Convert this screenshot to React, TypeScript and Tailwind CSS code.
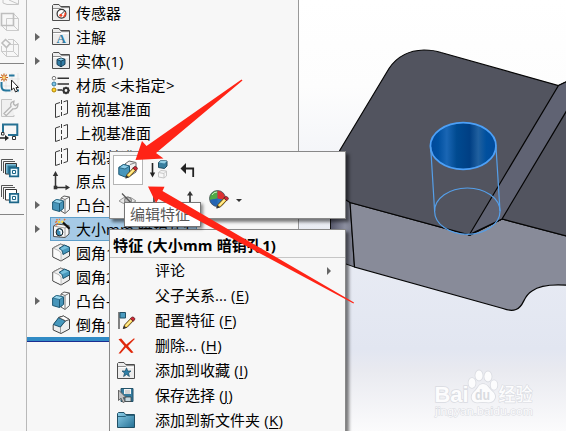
import React from "react";

type IconProps = { children: React.ReactNode; w?: number; h?: number; vb?: string };

function Ico({ children, w = 20, h = 20, vb = "0 0 20 20" }: IconProps) {
  return (
    <svg width={w} height={h} viewBox={vb} className="block shrink-0 overflow-visible" fill="none">
      {children}
    </svg>
  );
}

const Folder = ({ children }: { children: React.ReactNode }) => (
  <Ico>
    <path d="M.5 17.5V2.5L1.5 1.5H7L8.5 3.5H17.5V17.5Z" fill="#ececec" stroke="#4d4d4d" />
    <path d="M1 5.5H8.5L9.5 4.5H17" stroke="#777" strokeWidth=".8" />
    <path d="M1.5 6.5H16.5" stroke="#fff" />
    {children}
  </Ico>
);

const Sensor = () => (
  <Folder>
    <circle cx="9.5" cy="10.8" r="4.4" fill="#fff" stroke="#333" strokeWidth="1.2" />
    <path d="M9.5 11L12.5 8" stroke="#333" />
    <path d="M13.2 9.5A4 4 0 0 1 11.5 13.8" stroke="#ee4324" strokeWidth="1.6" />
    <circle cx="8.8" cy="12.2" r="1.5" fill="#ee4324" />
  </Folder>
);

const Note = () => (
  <Folder>
    <text x="9.2" y="15.6" textAnchor="middle" fontSize="13" fontWeight="700" fill="#2f7ba3" fontFamily="Liberation Serif, serif">
      A
    </text>
  </Folder>
);

const Solid = () => (
  <Folder>
    <path d="M5 8.5L9 7L13 8.3V13.3L9 15.8L5 13.5Z" fill="#327da5" stroke="#193f56" />
    <path d="M5 8.5L9 10L13 8.3M9 10V15.5" stroke="#153b50" />
    <path d="M5.9 8.4L9 7.4L12 8.3L9 9.4Z" fill="#8bd0ee" />
  </Folder>
);

const Material = () => (
  <Ico>
    <circle cx="2" cy="3.2" r="1.8" fill="#fff" stroke="#777" />
    <circle cx="2" cy="9" r="2" fill="#7dc5e8" stroke="#38799b" />
    <circle cx="2" cy="15" r="2" fill="#ffd12d" stroke="#ad8200" />
    <path d="M5.5 3.2H17M5.5 9H17M5.5 15H10" stroke="#333" strokeWidth="1.4" />
    <circle cx="14" cy="15.5" r="2.4" stroke="#333" strokeWidth="2" />
    <path d="M14 11.7V13M14 18V19.3M10.2 15.5H11.5M16.5 15.5H17.8M11.3 12.8L12.2 13.7M15.8 17.3L16.7 18.2M16.7 12.8L15.8 13.7M12.2 17.3L11.3 18.2" stroke="#333" strokeWidth="1.4" />
  </Ico>
);

const Plane = () => (
  <Ico>
    <path d="M8 3.5L3.5 5V18.5L8 17M11.5 2.8L15.5 1.5V14.5L11.5 15.8" stroke="#3c3c3c" />
    <path d="M9.5 1V19" stroke="#3c3c3c" strokeDasharray="4 2" />
  </Ico>
);

const Origin = () => (
  <Ico>
    <path d="M3.5 4V16.5H16" stroke="#333" strokeWidth="1.5" />
    <path d="M.8 5L3.5 0L6.2 5ZM13.5 13.8L18 16.5L13.5 19.2Z" fill="#333" />
    <path d="M1.7 14.7H5.3V18.3H1.7Z" fill="#333" />
  </Ico>
);

const Extrude = () => (
  <Ico>
    <path d="M9 3L12 1L17.5 2V14.5L13 18.5L9 16Z" fill="#fafafa" stroke="#5b5b5b" />
    <path d="M13 4.5V18M13 4.5L17.5 2M9 3L13 4.5" stroke="#777" />
    <path d="M.6 7L4.5 4.5L11.5 6V13.5L7.5 16.5L.6 14.5Z" fill="#4795ba" stroke="#1d5874" />
    <path d="M.8 7L7.5 8.5L11.5 6L4.5 4.5Z" fill="#9ad7ee" stroke="#1c5b7a" strokeWidth=".7" />
    <path d="M7.5 8.5V16.5" stroke="#1d5874" />
  </Ico>
);

const Hole = () => (
  <Ico>
    <path d="M1.5 7L5 5L17 6.5V15L13 18.5L1.5 17.5Z" fill="#f8f8f8" stroke="#4c4c4c" />
    <path d="M1.5 7L13 9V18.5M13 9L17 6.5" stroke="#888" strokeWidth=".8" />
    <ellipse cx="7.5" cy="13.2" rx="3.4" ry="3.7" fill="#3c8bb3" stroke="#222" />
    <path d="M7 10.8L9.2 12.2V15.2" stroke="#fff" strokeWidth="1.5" />
    <path d="M10.5 3L17.5 9.8" stroke="#111" strokeWidth="2.3" />
    <path d="M9.5 2L11 3.5" stroke="#ffe35c" strokeWidth="2.4" />
    <path d="M3.2 3.5L5 2.2M7.5 .8V-.3M12 1.2L13.2 0M4.5 .3L5.5 1.3M4 6L5.7 5.2" stroke="#e86929" strokeWidth="1.4" />
    <path d="M6 3.5L8 2.5" stroke="#ffd329" strokeWidth="2" />
  </Ico>
);

const Fillet = () => (
  <Ico>
    <path d="M.8 5L8.5 1L17.5 4.3V13L9 18L.8 14Z" fill="#eee" stroke="#444" />
    <path d="M1 5L7 7.8L9 10V18M1 5L8.5 1.3L14 3" stroke="#aaa" strokeWidth=".8" />
    <path d="M1.5 6L6.7 8.4L8.3 10.5V16.7L1.5 13.4Z" fill="#fafafa" />
    <path d="M7 5.5L12.5 2L17.5 4.3V8L11 11.5C10.5 8 9.5 6 7 5.5Z" fill="#4798bd" stroke="#1b526d" />
    <path d="M8.5 5.3L12.7 2.9L16.5 4.5L10.2 7.3Z" fill="#78c0dc" />
  </Ico>
);

const Chamfer = () => (
  <Ico>
    <path d="M1.2 10L7.5 2L11.5 1L17.5 4.5V14L9 18.5L1.2 15Z" fill="#eee" stroke="#444" />
    <path d="M8.5 12V18M8.5 12L13.5 6L17.5 4.5" stroke="#999" />
    <path d="M1.4 9.5L6.7 2.5L13.5 5.8L8.3 12Z" fill="#4798bd" stroke="#1b526d" />
    <path d="M6.7 2.5L11.5 1L17.5 4.5L13.5 5.8Z" fill="#fff" stroke="#444" strokeWidth=".8" />
  </Ico>
);

const Pencil = () => (
  <g>
    <path d="M7.8 18L9 14.5L15.2 8L17.8 10.3L11.6 16.8Z" fill="#ffd44e" stroke="#4a3a20" strokeWidth=".9" />
    <path d="M10.5 15.2L16.2 9.2" stroke="#fff2a6" strokeWidth="1.2" />
    <path d="M14.8 8.2L16 6.9Q17.3 5.9 18.7 7.2T18.9 9.5L17.8 10.7Z" fill="#cf2834" stroke="#5b1c20" strokeWidth=".8" />
    <path d="M7.3 18.6L8.6 15.2L10.9 17.3Z" fill="#333" />
  </g>
);

const tree: { icon: () => React.ReactElement; text: string; arrow?: boolean; selected?: boolean }[] = [
  { icon: Sensor, text: "传感器" },
  { icon: Note, text: "注解", arrow: true },
  { icon: Solid, text: "实体(1)", arrow: true },
  { icon: Material, text: "材质 <未指定>" },
  { icon: Plane, text: "前视基准面" },
  { icon: Plane, text: "上视基准面" },
  { icon: Plane, text: "右视基准面" },
  { icon: Origin, text: "原点" },
  { icon: Extrude, text: "凸台-拉伸1", arrow: true },
  { icon: Hole, text: "大小mm 暗销孔1", arrow: true, selected: true },
  { icon: Fillet, text: "圆角1" },
  { icon: Fillet, text: "圆角2" },
  { icon: Extrude, text: "凸台-拉伸2", arrow: true },
  { icon: Chamfer, text: "倒角1" },
];

function WireCube({ ball }: { ball?: boolean }) {
  return (
    <Ico>
      <path d="M6.5 6.5H18.5V18.5H6.5ZM13.5 1.5L18.5 6.5M1.5 13.5L6.5 18.5M13.5 13.5L18.5 18.5" stroke="#cbcbcb" />
      {ball ? (
        <>
          <path d="M8 1.5H13.5V13.5H1.5V8" stroke="#cbcbcb" />
          <path d="M2 5L5.5 1.5L10 5.5L6.5 9.5Z" fill="#f7f7f7" stroke="#bdbdbd" strokeWidth="1.6" />
        </>
      ) : (
        <path d="M1.5 1.5H13.5V13.5H1.5Z" stroke="#bebebe" strokeWidth="1.6" />
      )}
    </Ico>
  );
}

function Layers({ open }: { open?: boolean }) {
  return (
    <Ico>
      <path d="M1.5 13V1.5H13" stroke="#555" />
      <path d="M3.5 15V3.5H15" stroke="#555" />
      <path d="M5.5 5.5H16.5V16H5.5Z" fill={open ? "#fff" : "#7fbcd6"} stroke="#333" />
      {!open && <path d="M7.5 7.5H16V15.5H7.5Z" fill="#2d7898" />}
      <path d="M9.8 9.8H18.3V18.3H9.8Z" fill="#e9f7fc" stroke="#1d6688" strokeWidth="1.7" />
      <path d="M12.5 12.5H15.5V15.5H12.5Z" fill="#fff" stroke="#1d6688" />
    </Ico>
  );
}

function ToolRail() {
  return (
    <aside className="flex h-full w-[27px] shrink-0 flex-col overflow-hidden border-r border-[#b9b9b9]">
      <div className="h-[12px] shrink-0 overflow-hidden">
        <svg width="20" height="6" viewBox="0 0 20 6" fill="none">
          <path d="M3 0V3L7 4.5H18.5V0M9 0L18 4" stroke="#c6c6c6" />
        </svg>
      </div>
      <div className="flex h-[51px] shrink-0 flex-col gap-[6px] pb-[5px]">
        <WireCube />
        <WireCube ball />
      </div>
      <div className="mr-[2px] h-px shrink-0 bg-[#858585]" />
      <div className="flex h-[85px] shrink-0 flex-col gap-[5px] pt-[9px]">
        <Ico>
          <path d="M6 0V20M12 0V20M18 0V20M0 6H20M0 13H20" stroke="#dedede" strokeWidth=".7" />
          <path d="M9 2.5H14.5M1.5 9V13Q1.5 17.5 6 17.5H10.5M15 17.5H19" stroke="#25779d" strokeWidth="2" />
          <path d="M4 .5V8.5M0 4.5H8M1.2 1.7L6.8 7.3M6.8 1.7L1.2 7.3" stroke="#c8641e" strokeWidth="1.2" />
          <circle cx="4" cy="4.5" r="1.6" fill="#ffd77a" />
          <path d="M11.5 7V17L13.8 15L15.5 19L17.5 18L16 14.5H18.5Z" fill="#fff" stroke="#222" />
        </Ico>
        <Ico>
          <path d="M14 17V18.5H1.5V1.5H12" fill="#f0f0f0" stroke="#c4c4c4" />
          <path d="M4 15.5L11 8.5Q9.5 4.5 14 3.2L13.5 6L15.3 7.6L18 6Q18 11.5 13 10.8L6.2 17.6Z" fill="#f4f4f4" stroke="#b5b5b5" strokeWidth="1.3" />
        </Ico>
        <Ico>
          <path d="M3 9V1.5H17.3V12H8" stroke="#267193" strokeWidth="2" />
          <path d="M0 15H6" stroke="#222" strokeWidth="1.5" />
          <path d="M5 12L9 15L5 18Z" fill="#222" />
          <path d="M12.5 13.5H15.5V16.5H12.5ZM1.5 9.5H4V12H1.5Z" fill="#fff" stroke="#333" />
        </Ico>
      </div>
      <div className="mr-[2px] h-px shrink-0 bg-[#858585]" />
      <div className="flex h-[64px] shrink-0 flex-col gap-[6px] pt-[8px]">
        <Layers />
        <Layers open />
      </div>
      <div className="mr-[2px] h-px shrink-0 bg-[#858585]" />
    </aside>
  );
}

function FeatureTree() {
  return (
    <section className="flex h-full w-[272px] shrink-0 flex-col border-r border-[#999] pt-[1px]">
      {tree.map(({ icon: Icon, text, arrow, selected }, i) => (
        <div key={i} className="flex h-[24px] shrink-0 items-center pl-2">
          <span className="flex w-[15px] shrink-0">
            {arrow && <span className="h-0 w-0 border-y-[4px] border-l-[5px] border-y-transparent border-l-[#666]" />}
          </span>
          <div
            className={
              selected
                ? "flex h-6 w-[147px] items-center gap-[4px] border border-[#5f9fca] bg-[#a6cae6] pl-[1px] whitespace-nowrap"
                : "flex h-6 items-center gap-[4px] pl-[2px] whitespace-nowrap"
            }
          >
            <Ico>
              <Icon />
            </Ico>
            <span className={text.includes("<") ? "text-[15px] leading-6 tracking-[0.35px]" : "text-[15px] leading-6"}>{text}</span>
          </div>
        </div>
      ))}
      <div className="h-[5px] shrink-0 border-b border-[#1b2d91] bg-[#318bc5]" />
    </section>
  );
}

function Viewport() {
  return (
    <main className="h-full min-w-0 flex-1">
      <svg width="267" height="431" viewBox="299 0 267 431" fill="none" className="block">
        <defs>
          <linearGradient id="sky" x1="0" y1="0" x2="0" y2="1">
            <stop offset="0" stopColor="#fff" />
            <stop offset=".2" stopColor="#fdfdfd" />
            <stop offset=".55" stopColor="#e9ecf4" />
            <stop offset=".81" stopColor="#e2e6f1" />
            <stop offset=".86" stopColor="#e9eaf0" />
            <stop offset="1" stopColor="#fbfbfc" />
          </linearGradient>
          <linearGradient id="bore" x1="0" y1="0" x2="1" y2="0">
            <stop offset="0" stopColor="#00489a" />
            <stop offset=".12" stopColor="#0050a0" />
            <stop offset=".25" stopColor="#1a66b4" />
            <stop offset=".4" stopColor="#004a90" />
            <stop offset=".6" stopColor="#003f84" />
            <stop offset=".73" stopColor="#20609f" />
            <stop offset=".85" stopColor="#00509e" />
            <stop offset="1" stopColor="#004a9c" />
          </linearGradient>
          <linearGradient id="side" x1="0" y1="0" x2="1" y2="0">
            <stop offset="0" stopColor="#55576a" />
            <stop offset=".6" stopColor="#8b8e9f" />
            <stop offset="1" stopColor="#777a89" />
          </linearGradient>
        </defs>
        <rect x="299" width="267" height="431" fill="url(#sky)" />
        <path d="M330.5 180L350 201L354.5 267L346 264L330.5 255Z" fill="url(#side)" stroke="#111" />
        <path
          d="M350 202.5L470 235L502 219L570 237V285.5C554 284 541 284.5 532 291C522 297 525 306 516 309.5Q511 311.5 503 308.5L354.5 267Z"
          fill="#888b99"
          stroke="#050505"
          strokeWidth="1.2"
        />
        <path
          d="M340 150L389 68.5Q401 50.5 424 50Q434 50 441 52.5L558.5 85.5L570 80V237L502 219L470 235L350 202.5Q327 190 332 166Z"
          fill="#52545f"
          stroke="#050505"
          strokeWidth="1.2"
        />
        <path d="M558.5 85.5L570 80V105L502 219L469.5 234.5Z" fill="#606373" stroke="#050505" strokeWidth="1.2" />
        <ellipse cx="463.2" cy="146" rx="32.8" ry="23.3" fill="url(#bore)" stroke="#4da0f7" strokeWidth="1.8" />
        <ellipse cx="467.3" cy="211.2" rx="32.7" ry="23.2" stroke="#559fe9" strokeWidth="1.2" />
        <path d="M430.7 147L434.6 211M496 147L500 211" stroke="#559fe9" strokeWidth="1.2" />
        <g stroke="#d9dbe1" strokeWidth="1.6" fill="#fcfcfd" paintOrder="stroke" fontFamily="Liberation Sans, Noto Sans CJK SC, sans-serif">
          <text x="434.5" y="401.5" fontSize="22.5" fontWeight="700" textLength="34" lengthAdjust="spacingAndGlyphs">Bai</text>
          <ellipse cx="472" cy="383" rx="3.5" ry="4.9" />
          <ellipse cx="479" cy="375.5" rx="3.6" ry="5.1" />
          <ellipse cx="488" cy="376.5" rx="3.6" ry="5.1" />
          <ellipse cx="494" cy="385" rx="3.4" ry="4.8" />
          <path d="M483 384C478 384 478 389 474 392C470 396 471 402 477 402.5Q483 401.5 489 402.5C495 402 497 396 493 392C489 389 488 384 483 384Z" />
          <text x="475" y="399.5" fontSize="15" fontWeight="700" textLength="15" lengthAdjust="spacingAndGlyphs" fill="#d9dbe0" stroke="none">du</text>
          <text x="498.5" y="400.5" fontSize="18" fontWeight="500" strokeWidth="1.2" textLength="34" lengthAdjust="spacingAndGlyphs">经验</text>
          <text x="435" y="415" fontSize="11.5" strokeWidth="1" textLength="98" lengthAdjust="spacingAndGlyphs">jingyan.baidu.com</text>
        </g>
      </svg>
    </main>
  );
}

function ContextToolbar() {
  return (
    <div className="absolute top-[151px] left-[109px] flex h-[68px] w-[237px] flex-col border border-[#888] bg-[#f7f7f7] pt-[3px] pl-[3px] shadow-[3px_3px_3px_rgba(0,0,0,0.5)]">
      <div className="flex h-[30px] items-center">
        <div className="flex h-[30px] w-[30px] items-center justify-center border border-[#b5b5b5] bg-white">
          <Ico>
            <path d="M7 4L11 1L18 2.5V12L12 16Z" fill="#f1f1f1" stroke="#666" />
            <path d="M12 4.5L18 2.5" stroke="#888" />
            <path d="M.8 7.5L5.5 4.5L11.5 6V14L7 17L.8 14.5Z" fill="#4896bb" stroke="#1d5874" />
            <path d="M.8 7.5L7 9L11.5 6L5.5 4.5Z" fill="#8ccde8" stroke="#1d5874" strokeWidth=".8" />
            <Pencil />
          </Ico>
        </div>
        <div className="flex w-[31px] justify-center">
          <Ico>
            <path d="M3.5 3V14" stroke="#222" strokeWidth="1.6" />
            <path d="M.8 12.5H6.2L3.5 17.5Z" fill="#222" />
            <path d="M9.5 2.5L12 .5L18 1V6L15.5 8.5L9.5 7.5Z" fill="#397f9f" stroke="#204c61" />
            <path d="M10 2.5L15.5 3.5L18 1L12 .5Z" fill="#92cee4" />
            <path d="M9.5 12.5L12 10.5L17.5 11V16L15 18L9.5 17ZM9.5 12.5L15 13.5V18M15 13.5L17.5 11" stroke="#c7c7c7" />
          </Ico>
        </div>
        <div className="flex w-[29px] justify-center">
          <Ico>
            <path d="M7 8.5H14.2V17" stroke="#222" strokeWidth="1.8" />
            <path d="M7 3V14L1.5 8.5Z" fill="#222" />
          </Ico>
        </div>
      </div>
      <div className="flex h-[30px] items-center">
        <div className="flex w-[30px] justify-center">
          <Ico>
            <path d="M1 11Q9 3 18 11Q9 17 1 11Z" fill="#e8e8e8" stroke="#999" />
            <circle cx="10" cy="10.5" r="3.5" fill="#bbb" stroke="#777" />
            <path d="M4 3.5L17 17" stroke="#555" strokeWidth="1.2" />
          </Ico>
        </div>
        <div className="flex w-[31px] justify-center">
          <Ico>
            <path d="M5 4V15M5 6H15L12 9" stroke="#333" strokeWidth="1.6" />
          </Ico>
        </div>
        <div className="flex w-[29px] justify-center">
          <Ico>
            <path d="M11 3V19" stroke="#333" strokeWidth="1.6" />
            <path d="M8 5.5L11 1L14 5.5Z" fill="#333" />
          </Ico>
        </div>
        <div className="flex w-[32px] justify-center">
          <Ico>
            <circle cx="8.5" cy="8.5" r="8" fill="#2972bc" />
            <path d="M8.5 8.5V.5A8 8 0 0 0 .7 10Z" fill="#50a946" />
            <path d="M8.5 .5A8 8 0 0 1 16.3 10L8.5 8.5Z" fill="#dc3032" />
            <path d="M8.5 8.5L.7 10A8 8 0 0 0 8.5 16.5Z" fill="#2464b2" />
            <circle cx="8.5" cy="8.5" r="8" stroke="#555" strokeWidth=".7" />
            <path d="M3 5Q4.5 2 8 2" stroke="#c6efbd" />
            <Pencil />
          </Ico>
        </div>
        <span className="ml-[1px] h-0 w-0 border-x-[3px] border-t-[3px] border-x-transparent border-t-[#333]" />
      </div>
    </div>
  );
}

const Configure = () => (
  <Ico>
    <path d="M2 1V18" stroke="#333" strokeWidth="1.2" />
    <path d="M3 1.5H8.5V7H3Z" fill="#4a9bc0" stroke="#205269" />
    <g transform="translate(-1.5 -.5)">
      <Pencil />
    </g>
  </Ico>
);
const Delete = () => (
  <Ico>
    <path d="M1.5 3.2L4.2 2.6L9.3 8.6L17 2.2L17.8 3L11 9.9L16.5 16.5L14.2 17L8.8 11.5L3.5 17.5H1.5L7.4 10Z" fill="#e0290b" />
  </Ico>
);
const Favorite = () => (
  <Folder>
    <path d="M9.5 6.8L10.7 10H14L11.5 12L12.4 15.5L9.5 13.5L6.6 15.5L7.5 12L5 10H8.3Z" fill="#2e7fa7" stroke="#184a64" strokeWidth=".7" />
  </Folder>
);
const Save = () => (
  <Ico>
    <path d="M4 2.5H16V15.5H4Z" fill="#347b9d" stroke="#24536a" />
    <path d="M7 3H14V8H7Z" fill="#f4f4f4" />
    <path d="M8 5H13M8 7H13" stroke="#999" strokeWidth=".7" />
    <path d="M8 11H14V15.5H8Z" fill="#c7d8df" stroke="#333" strokeWidth=".7" />
    <path d="M1.5 4V14.5L4 12.2L6 16.5L8 15.5L6.2 11.5H9Z" fill="#c4c4c4" stroke="#666" />
  </Ico>
);
const BlueFolder = () => (
  <Ico>
    <defs>
      <linearGradient id="folderBlue" x1="0" y1="0" x2="1" y2="1">
        <stop stopColor="#8fd0ea" />
        <stop offset="1" stopColor="#236f94" />
      </linearGradient>
    </defs>
    <path d="M.5 16.5V2.5L1.5 1.5H7L8.5 3.5H17.5V16.5Z" fill="url(#folderBlue)" stroke="#204f65" />
    <path d="M1 5.5H8.5L9.5 4.5H17" stroke="#28627d" />
  </Ico>
);

const menu: { text: string; hotkey?: string; icon?: () => React.ReactElement; sub?: boolean }[] = [
  { text: "评论", sub: true },
  { text: "父子关系...", hotkey: "E" },
  { text: "配置特征", hotkey: "F", icon: Configure },
  { text: "删除...", hotkey: "H", icon: Delete },
  { text: "添加到收藏", hotkey: "I", icon: Favorite },
  { text: "保存选择", hotkey: "J", icon: Save },
  { text: "添加到新文件夹", hotkey: "K", icon: BlueFolder },
];

function ContextMenu() {
  return (
    <div className="absolute top-[229px] left-[109px] h-[210px] w-[237px] border border-[#888] bg-[#f7f7f7] shadow-[3px_3px_3px_rgba(0,0,0,0.5)]">
      <div className="h-[28px] border-b border-[#c6c6c6] pl-[3px] text-[15px] leading-[30px] font-bold tracking-[0.15px] whitespace-nowrap">
        特征 (大小mm 暗销孔1)
      </div>
      {menu.map(({ text, hotkey, icon: Icon, sub }) => (
        <div key={text} className="flex h-[25px] items-center pr-[14px] pl-[7px]">
          <span className="w-[38px] shrink-0">{Icon && <Icon />}</span>
          <span className="flex-1 text-[15px] leading-[25px] whitespace-nowrap">
            {text}
            {hotkey && (
              <span className="tracking-[0.3px]">
                {" "}(<span className="underline underline-offset-2">{hotkey}</span>)
              </span>
            )}
          </span>
          {sub && <span className="h-0 w-0 border-y-[4px] border-l-[4px] border-y-transparent border-l-[#666]" />}
        </div>
      ))}
    </div>
  );
}

export default function App() {
  return (
    <div className="relative flex h-[431px] w-[566px] overflow-hidden bg-[#f7f7f7] font-['Open_Sans','Noto_Sans_CJK_SC',sans-serif] text-black">
      <ToolRail />
      <FeatureTree />
      <Viewport />
      <ContextToolbar />
      <ContextMenu />
      <div className="absolute top-[202px] left-[124px] h-[25px] w-[77px] border border-[#777] bg-white pl-[5px] text-[15px] leading-[23px] whitespace-nowrap text-[#575757] shadow-[2px_2px_3px_rgba(0,0,0,0.45)]">
        编辑特征
      </div>
      <svg className="pointer-events-none absolute inset-0" width="566" height="431" viewBox="0 0 566 431">
        <path d="M135.5 160L142 141L146.5 146L241.5 79.5L242.5 80.5L156 153L163.5 158.5Z" fill="#ff2416" />
        <path d="M148 186.5L164.5 186.8L162.5 191L354 302.5L353.5 303.5L158.5 199L156 203Z" fill="#ff2416" />
      </svg>
    </div>
  );
}
